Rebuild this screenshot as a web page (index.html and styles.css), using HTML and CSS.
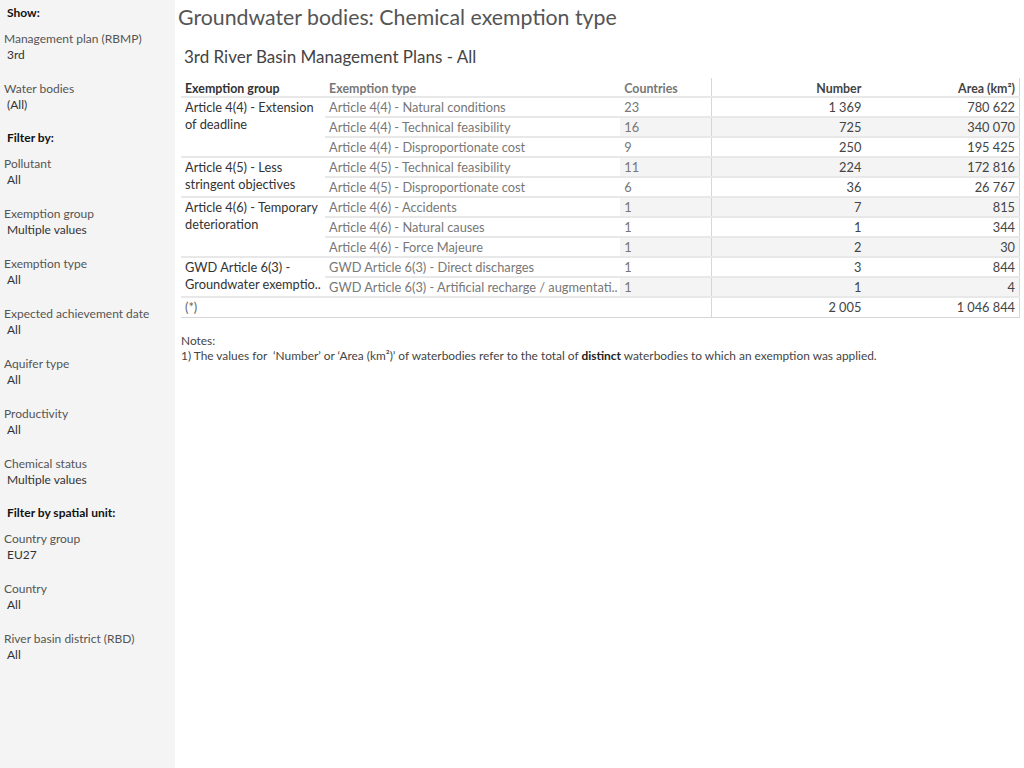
FILE: index.html
```html
<!DOCTYPE html>
<html lang="en">

<head>
    <meta charset="UTF-8">
    <meta name="viewport" content="width=device-width, initial-scale=1.0">
    <title>Groundwater bodies: Chemical exemption type</title>
    <link rel="stylesheet" href="styles.css">
</head>

<body>
    <div class="side">
        <div class="head">Show:</div>
        <div class="filter">
            <div class="label">Management plan (RBMP)</div>
            <div class="value">3rd</div>
        </div>
        <div class="filter">
            <div class="label">Water bodies</div>
            <div class="value">(All)</div>
        </div>
        <div class="head">Filter by:</div>
        <div class="filter">
            <div class="label">Pollutant</div>
            <div class="value">All</div>
        </div>
        <div class="filter">
            <div class="label">Exemption group</div>
            <div class="value">Multiple values</div>
        </div>
        <div class="filter">
            <div class="label">Exemption type</div>
            <div class="value">All</div>
        </div>
        <div class="filter">
            <div class="label">Expected achievement date</div>
            <div class="value">All</div>
        </div>
        <div class="filter">
            <div class="label">Aquifer type</div>
            <div class="value">All</div>
        </div>
        <div class="filter">
            <div class="label">Productivity</div>
            <div class="value">All</div>
        </div>
        <div class="filter">
            <div class="label">Chemical status</div>
            <div class="value">Multiple values</div>
        </div>
        <div class="head">Filter by spatial unit:</div>
        <div class="filter">
            <div class="label">Country group</div>
            <div class="value">EU27</div>
        </div>
        <div class="filter">
            <div class="label">Country</div>
            <div class="value">All</div>
        </div>
        <div class="filter">
            <div class="label">River basin district (RBD)</div>
            <div class="value">All</div>
        </div>
    </div>

    <div class="main">
        <h1 class="title">Groundwater bodies: Chemical exemption type</h1>
        <h2 class="subtitle">3rd River Basin Management Plans - All</h2>

        <table class="grid">
            <thead>
                <tr>
                    <th class="c-group">Exemption group</th>
                    <th class="c-type">Exemption type</th>
                    <th class="c-ctry">Countries</th>
                    <th class="c-num">Number</th>
                    <th class="c-area">Area (km²)</th>
                </tr>
            </thead>
            <tbody>
                <tr>
                    <td class="c-group" rowspan="3">Article 4(4) - Extension of deadline</td>
                    <td class="c-type">Article 4(4) - Natural conditions</td>
                    <td class="c-ctry">23</td>
                    <td class="c-num">1&#8239;369</td>
                    <td class="c-area">780&#8239;622</td>
                </tr>
                <tr class="band">
                    <td class="c-type">Article 4(4) - Technical feasibility</td>
                    <td class="c-ctry">16</td>
                    <td class="c-num">725</td>
                    <td class="c-area">340&#8239;070</td>
                </tr>
                <tr>
                    <td class="c-type">Article 4(4) - Disproportionate cost</td>
                    <td class="c-ctry">9</td>
                    <td class="c-num">250</td>
                    <td class="c-area">195&#8239;425</td>
                </tr>
                <tr class="band">
                    <td class="c-group" rowspan="2">Article 4(5) - Less stringent objectives</td>
                    <td class="c-type">Article 4(5) - Technical feasibility</td>
                    <td class="c-ctry">11</td>
                    <td class="c-num">224</td>
                    <td class="c-area">172&#8239;816</td>
                </tr>
                <tr>
                    <td class="c-type">Article 4(5) - Disproportionate cost</td>
                    <td class="c-ctry">6</td>
                    <td class="c-num">36</td>
                    <td class="c-area">26&#8239;767</td>
                </tr>
                <tr class="band">
                    <td class="c-group" rowspan="3">Article 4(6) - Temporary deterioration</td>
                    <td class="c-type">Article 4(6) - Accidents</td>
                    <td class="c-ctry">1</td>
                    <td class="c-num">7</td>
                    <td class="c-area">815</td>
                </tr>
                <tr>
                    <td class="c-type">Article 4(6) - Natural causes</td>
                    <td class="c-ctry">1</td>
                    <td class="c-num">1</td>
                    <td class="c-area">344</td>
                </tr>
                <tr class="band">
                    <td class="c-type">Article 4(6) - Force Majeure</td>
                    <td class="c-ctry">1</td>
                    <td class="c-num">2</td>
                    <td class="c-area">30</td>
                </tr>
                <tr>
                    <td class="c-group" rowspan="2">GWD Article 6(3) - Groundwater exemptio..</td>
                    <td class="c-type">GWD Article 6(3) - Direct discharges</td>
                    <td class="c-ctry">1</td>
                    <td class="c-num">3</td>
                    <td class="c-area">844</td>
                </tr>
                <tr class="band">
                    <td class="c-type">GWD Article 6(3) - Artificial recharge / augmentati..</td>
                    <td class="c-ctry">1</td>
                    <td class="c-num">1</td>
                    <td class="c-area">4</td>
                </tr>
                <tr class="total">
                    <td class="c-group">(*)</td>
                    <td class="c-type"></td>
                    <td class="c-ctry"></td>
                    <td class="c-num">2&#8239;005</td>
                    <td class="c-area">1&#8239;046&#8239;844</td>
                </tr>
            </tbody>
        </table>

        <div class="notes">
            <p>Notes:</p>
            <p>1) The values for &nbsp;‘Number’ or ‘Area (km²)’ of waterbodies refer to the total of <b>distinct</b> waterbodies to which an exemption was applied.</p>
        </div>
    </div>
</body>

</html>
```

FILE: styles.css
```css
* {
    margin: 0;
    padding: 0;
    box-sizing: border-box;
}

html,
body {
    width: 100%;
    height: 100%;
}

body {
    display: flex;
    font-family: Lato, "Liberation Sans", sans-serif;
    color: #333;
    background: #fff;
}

/* 左侧筛选栏 */
.side {
    width: 175px;
    flex-shrink: 0;
    height: 100%;
    background: #f4f4f4;
}

.side .head {
    height: 25px;
    line-height: 26px;
    padding-left: 7px;
    font-size: 12px;
    font-weight: 700;
    color: #111;
}

.side .filter {
    height: 50px;
    padding-left: 4px;
    padding-top: 5px;
    font-size: 12px;
}

.side .label {
    line-height: 17px;
    color: #555;
}

.side .value {
    line-height: 16px;
    padding-left: 3px;
    color: #333;
}

/* 主区域 */
.main {
    flex: 1;
    padding-left: 3px;
}

.title {
    font-size: 21.3px;
    font-weight: 400;
    color: #555;
    line-height: 24px;
    padding-top: 5px;
}

.subtitle {
    font-size: 17px;
    font-weight: 400;
    color: #444;
    line-height: 20px;
    margin-top: 18px;
    padding-left: 6px;
}

.grid {
    margin-top: 11px;
    margin-left: 3px;
    width: 839px;
    border-collapse: collapse;
    font-size: 12.8px;
    table-layout: fixed;
}

.grid th,
.grid td {
    height: 20px;
    line-height: 17px;
    padding: 0 4px;
    white-space: nowrap;
    border-bottom: 2px solid #e8e8e8;
    text-align: left;
}

.grid th {
    height: 19px;
    line-height: 15px;
    font-weight: 700;
    font-size: 12.4px;
    color: #333;
    padding-top: 3px;
    vertical-align: middle;
}

.grid td.c-group {
    white-space: normal;
    vertical-align: top;
    padding: 1px 2px 0 4px;
}

.grid .c-group {
    width: 144px;
    color: #333;
}

.grid .c-type {
    width: 295px;
    color: #777;
}

.grid .c-ctry {
    width: 91px;
    color: #777;
}

.grid .c-num,
.grid .c-area {
    width: 154px;
    text-align: right;
    color: #444;
}

.grid .c-num {
    border-left: 1px solid #d6d6d6;
}

.grid .c-area {
    border-right: 1px solid #d6d6d6;
}

.grid th.c-num,
.grid th.c-area {
    text-align: right;
}

.grid tr.band .c-ctry,
.grid tr.band .c-num,
.grid tr.band .c-area {
    background: #f4f4f4;
}

.grid tr.total .c-group {
    color: #666;
}

.grid tr.total td {
    border-bottom: 1px solid #d6d6d6;
}

.notes {
    margin-top: 15px;
    margin-left: 3px;
    font-size: 11.9px;
    line-height: 15px;
    color: #444;
}

.notes b {
    font-weight: 700;
    color: #222;
}
```
